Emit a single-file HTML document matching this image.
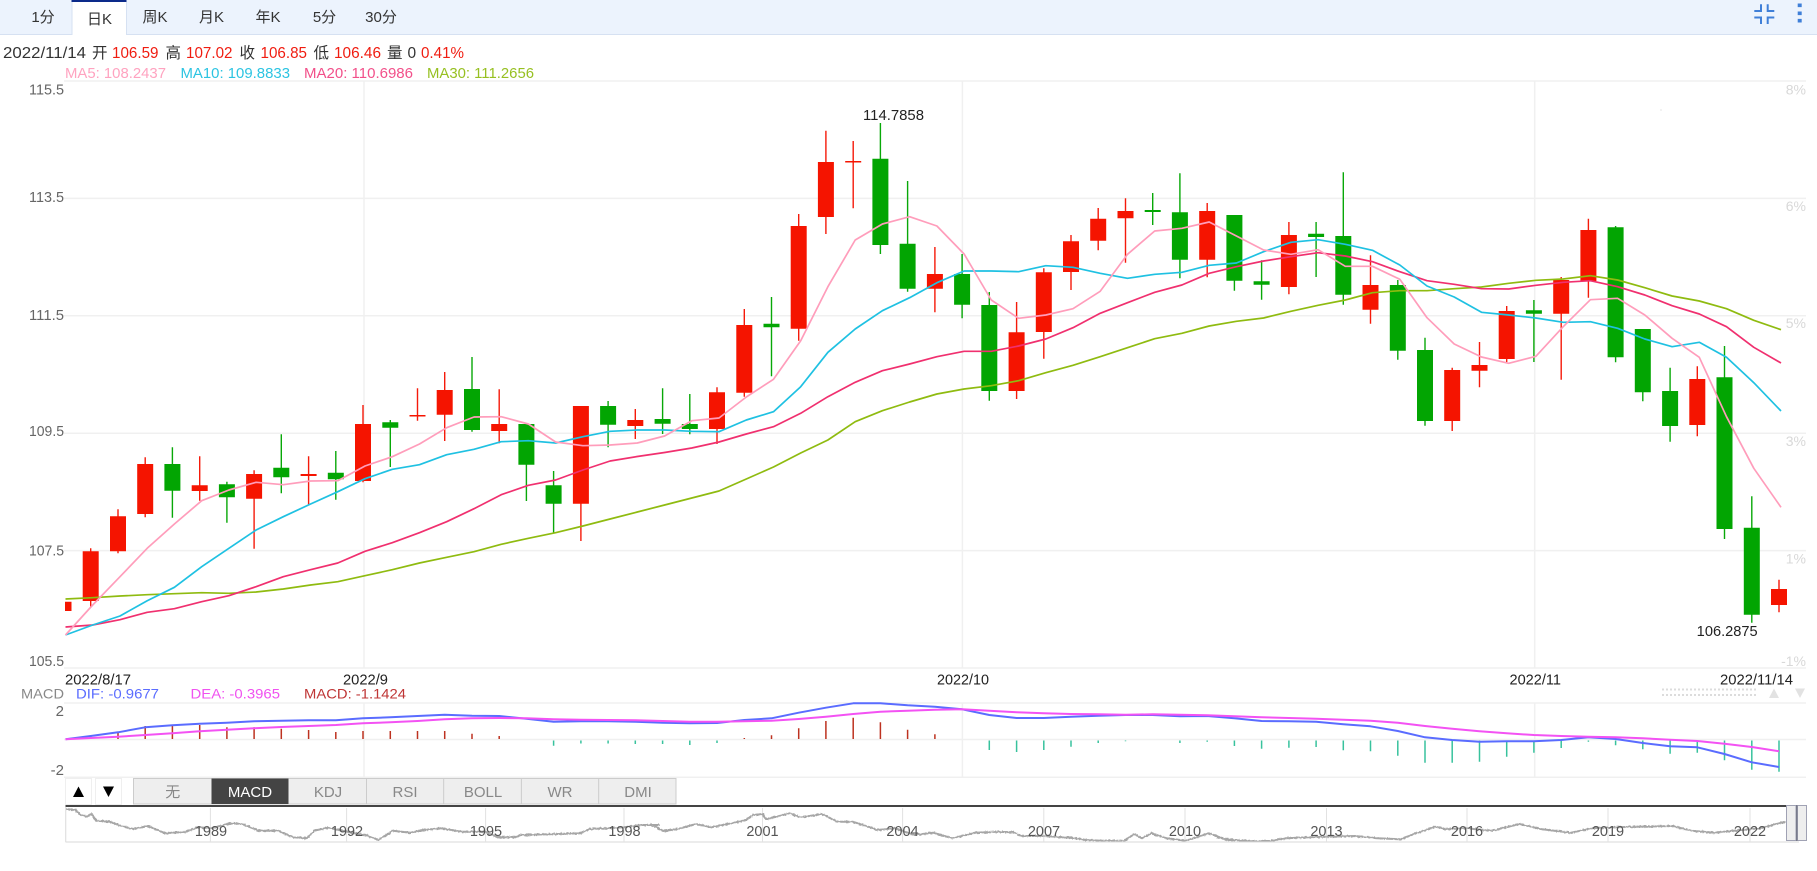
<!DOCTYPE html>
<html lang="zh">
<head>
<meta charset="utf-8">
<title>K</title>
<style>
html,body{margin:0;padding:0;background:#fff;width:1817px;height:871px;overflow:hidden}
svg{display:block}
text{font-family:"Liberation Sans","Noto Sans CJK SC",sans-serif;font-size:14px}
.ax{fill:#666}
.ax text{font-size:15px}
.pc{fill:#d8d8d8;text-anchor:end}
.tab{fill:#333;font-size:15px;text-anchor:middle}
.hd{fill:#333;font-size:15.5px}
.rd{fill:#f01c10;font-size:15.5px}
.ma{font-size:15px}
.bt{fill:#888;font-size:15px;text-anchor:middle}
.yr{fill:#555;font-size:14.5px;text-anchor:middle}
.dt{fill:#222;font-size:14.5px}
</style>
</head>
<body>
<svg width="1817" height="871" viewBox="0 0 1817 871" xmlns="http://www.w3.org/2000/svg">
<defs>
<clipPath id="cp"><rect x="65" y="81" width="1741" height="587"/></clipPath>
<clipPath id="np"><rect x="66" y="807" width="1720" height="34.5"/></clipPath>
<filter id="jit" x="-2%" y="-30%" width="104%" height="160%"><feTurbulence type="fractalNoise" baseFrequency="0.45" numOctaves="2" seed="4"/><feDisplacementMap in="SourceGraphic" scale="2.5" xChannelSelector="R" yChannelSelector="G"/></filter>
</defs>

<!-- top bar -->
<rect x="0" y="0" width="1817" height="34" fill="#ecf3fd"/>
<rect x="0" y="34" width="1817" height="1" fill="#d6e1f2"/>
<rect x="71.5" y="0" width="55" height="35" fill="#fff"/>
<path d="M72 2V35M126.5 2V35" stroke="#d6e1f2" stroke-width="1" fill="none"/>
<rect x="71.5" y="0" width="55" height="2" fill="#0c2a8a"/>
<text class="tab" x="43" y="22">1分</text>
<text class="tab" x="99.5" y="24">日K</text>
<text class="tab" x="155" y="22">周K</text>
<text class="tab" x="211.5" y="22">月K</text>
<text class="tab" x="268" y="22">年K</text>
<text class="tab" x="324.5" y="22">5分</text>
<text class="tab" x="381" y="22">30分</text>
<path d="M1754.3 11H1761V4.3M1767.7 4.3V11H1774.3M1754.3 17.5H1761V24M1774.3 17.5H1767.7V24" stroke="#3f7fd8" stroke-width="2" fill="none"/>
<path d="M1799.7 3.5v3.6M1799.7 11.5v3.6M1799.7 18.9v3.6" stroke="#3f7fd8" stroke-width="4" fill="none"/>

<!-- header info -->
<text class="hd" x="3" y="58" textLength="83" lengthAdjust="spacingAndGlyphs">2022/11/14</text>
<text class="hd" x="92" y="58">开</text>
<text class="rd" x="112" y="58" textLength="46.5" lengthAdjust="spacingAndGlyphs">106.59</text>
<text class="hd" x="165.5" y="58">高</text>
<text class="rd" x="186" y="58" textLength="46.5" lengthAdjust="spacingAndGlyphs">107.02</text>
<text class="hd" x="239.5" y="58">收</text>
<text class="rd" x="260.5" y="58" textLength="46.5" lengthAdjust="spacingAndGlyphs">106.85</text>
<text class="hd" x="313.5" y="58">低</text>
<text class="rd" x="334" y="58" textLength="47" lengthAdjust="spacingAndGlyphs">106.46</text>
<text class="hd" x="387" y="58">量</text>
<text class="hd" x="407.5" y="58">0</text>
<text class="rd" x="421" y="58" textLength="43" lengthAdjust="spacingAndGlyphs">0.41%</text>
<text class="ma" x="65" y="78" fill="#ffa3c0" textLength="101" lengthAdjust="spacingAndGlyphs">MA5: 108.2437</text>
<text class="ma" x="180.5" y="78" fill="#2cc4e2" textLength="109.5" lengthAdjust="spacingAndGlyphs">MA10: 109.8833</text>
<text class="ma" x="304" y="78" fill="#f2508a" textLength="109" lengthAdjust="spacingAndGlyphs">MA20: 110.6986</text>
<text class="ma" x="427" y="78" fill="#97c022" textLength="107" lengthAdjust="spacingAndGlyphs">MA30: 111.2656</text>

<!-- grid -->
<path d="M64 81H1806M64 198.4H1806M64 315.8H1806M64 433.2H1806M64 550.6H1806M64 668H1806" stroke="#f0f0f0" stroke-width="1.5" fill="none"/>
<path d="M364 81V668M962.4 81V668M1534.7 81V668M364 703V777M962.4 703V777M1534.7 703V777" stroke="#f0f0f0" stroke-width="1.5" fill="none"/>
<path d="M64 703H1806M64 739.5H1806M64 777.3H1806" stroke="#f0f0f0" stroke-width="1.5" fill="none"/>

<!-- price axis -->
<g class="ax">
<text x="29" y="94.5" textLength="35" lengthAdjust="spacingAndGlyphs">115.5</text>
<text x="29" y="202" textLength="35" lengthAdjust="spacingAndGlyphs">113.5</text>
<text x="29" y="320" textLength="35" lengthAdjust="spacingAndGlyphs">111.5</text>
<text x="29" y="436" textLength="35" lengthAdjust="spacingAndGlyphs">109.5</text>
<text x="29" y="555.5" textLength="35" lengthAdjust="spacingAndGlyphs">107.5</text>
<text x="29" y="666" textLength="35" lengthAdjust="spacingAndGlyphs">105.5</text>
</g>
<text class="pc" x="1806" y="94.5">8%</text>
<text class="pc" x="1806" y="211">6%</text>
<text class="pc" x="1806" y="328">5%</text>
<text class="pc" x="1806" y="446">3%</text>
<text class="pc" x="1806" y="563.5">1%</text>
<text class="pc" x="1806" y="666">-1%</text>
<path d="M1660 110h2M1662 110h0" stroke="#e6e6e6" stroke-width="1" fill="none"/>

<!-- candles -->
<g clip-path="url(#cp)" fill="none">
<path stroke="#f51a0a" stroke-width="1.4" d="M90.7 548.3V607M118 509.3V553.3M145.2 457.3V517.3M199.7 456.3V500.7M254.1 470.3V548.7M308.6 456.3V505M363 405V482.3M417.5 388.3V420.7M444.7 372V441M499.2 389.3V443.3M580.9 406V541M635.3 409V439M717 387.3V444M744.3 309V396.7M798.7 214V340.7M825.9 130.7V234M853.2 141V208.3M934.9 247V312.3M1016.6 302V399M1043.8 268.3V358.7M1071 235V290M1098.2 208V250.3M1125.5 198.3V262.7M1207.2 203V277.3M1288.9 222V294.3M1370.5 255.3V323.7M1452.2 367.7V431M1479.5 342V387.3M1506.7 306V362M1561.2 277V379.7M1588.4 218.7V297.7M1697.3 366.3V436.3M1779 579.7V612.3"/>
<path stroke="#f51400" stroke-width="16" d="M63.5 601.7V611M90.7 551.3V601M118 516.3V551.3M145.2 464V514M199.7 485.3V491M254.1 474V498.7M308.6 474V476M363 424V481M417.5 415V416.5M444.7 390V414.7M499.2 424V431M580.9 406V503.7M635.3 420V426M717 392.3V429M744.3 325V392.7M798.7 226V328.7M825.9 162V217M853.2 161V162.5M934.9 274V288.7M1016.6 332.3V391M1043.8 272.3V332M1071 241.3V272M1098.2 218.7V240.7M1125.5 211V218.3M1207.2 211V259.7M1288.9 235V287M1370.5 285V309.7M1452.2 370V421M1479.5 365V370.7M1506.7 311V359M1561.2 280V313.7M1588.4 230V281M1697.3 379V425M1779 589V605"/>
<path stroke="#08a808" stroke-width="1.4" d="M172.4 447.3V517.7M226.9 481.7V522.7M281.3 434.3V493.3M335.8 451V499.7M390.3 420V467M472 357V431.7M526.4 424V501M553.6 471V532.7M608.1 401V447.3M662.6 388.3V434M689.8 394V434.3M771.5 297V376.3M880.4 123V254M907.6 181V291.7M962.1 254V318.3M989.3 292V400.7M1152.7 193V225M1179.9 173.3V278.3M1234.4 215V290.7M1261.6 260.3V299.7M1316.1 222V277M1343.3 172.3V304.7M1397.8 280V359.7M1425 337.7V425.7M1533.9 300V362M1615.6 226V362.3M1642.8 329V401.3M1670.1 367.7V441.7M1724.5 346V539M1751.8 496.3V622.7"/>
<path stroke="#02a502" stroke-width="16" d="M172.4 464V490.7M226.9 484.3V497.3M281.3 467.7V477.3M335.8 472.7V479.3M390.3 422.3V427.7M472 389V430M526.4 424V464.7M553.6 485.3V503.7M608.1 406V424.7M662.6 419V423.7M689.8 424V429M771.5 323.7V327.3M880.4 158.7V245M907.6 243.7V288.7M962.1 274V304.7M989.3 305V391M1152.7 210V212M1179.9 212.3V259.7M1234.4 215V280.7M1261.6 281.3V284.7M1316.1 233.7V237M1343.3 236V294.7M1397.8 285V350.7M1425 350V421M1533.9 310.3V313.7M1615.6 227.3V357.3M1642.8 329V392.3M1670.1 391V426M1724.5 377.3V529M1751.8 527.7V614.7"/>
</g>

<!-- moving averages -->
<g transform="translate(2 0)" fill="none" stroke-width="1.7" stroke-linejoin="round">
<polyline stroke="#8fbb10" points="63.5,599 90.7,597.7 118,596 145.2,594.7 172.4,593.7 199.7,592.7 226.9,593.3 254.1,592 281.3,589 308.6,585 335.8,581.7 363,575.7 390.3,569.7 417.5,563 444.7,557.3 472,551.7 499.2,544.3 526.4,538.3 553.6,532.7 580.9,526 608.1,519 635.3,512 662.6,505 689.8,498 717,491 744.3,479 771.5,467 798.7,453 825.9,440 853.2,421.7 880.4,410.7 907.6,402 934.9,394 962.1,389 989.3,385.7 1016.6,380.7 1043.8,372.7 1071,365.3 1098.2,356.7 1125.5,347.7 1152.7,338.7 1179.9,333.3 1207.2,326 1234.4,321.3 1261.6,318 1288.9,311.3 1316.1,305.3 1343.3,300 1370.5,292.7 1397.8,290.7 1425,290.7 1452.2,288.7 1479.5,287 1506.7,283.3 1533.9,280.3 1561.2,279 1588.4,275.7 1615.6,280 1642.8,287.7 1670.1,296 1697.3,301 1724.5,308.7 1751.8,320.3 1779,329.7"/>
<polyline stroke="#f0306f" points="63.5,627 90.7,625 118,619.7 145.2,612.3 172.4,608.7 199.7,601.7 226.9,595.7 254.1,586.7 281.3,576.7 308.6,569.7 335.8,563 363,551.3 390.3,542.7 417.5,532.7 444.7,521.7 472,508.7 499.2,494.7 526.4,485.3 553.6,480 580.9,470 608.1,461 635.3,456.5 662.6,452.5 689.8,448 717,442 744.3,434 771.5,426.7 798.7,413.3 825.9,396.7 853.2,382.3 880.4,370.7 907.6,364 934.9,356.7 962.1,351.3 989.3,351.3 1016.6,346 1043.8,339 1071,327.7 1098.2,313.3 1125.5,302.7 1152.7,292.3 1179.9,285 1207.2,273.3 1234.4,266.7 1261.6,261 1288.9,256.7 1316.1,252.7 1343.3,256 1370.5,261.7 1397.8,271.7 1425,280.7 1452.2,284.3 1479.5,288.7 1506.7,289 1533.9,285.3 1561.2,282.3 1588.4,280.7 1615.6,286.7 1642.8,295 1670.1,305.7 1697.3,314 1724.5,326.7 1751.8,347.3 1779,363"/>
<polyline stroke="#1fc1e2" points="63.5,635 90.7,625 118,616 145.2,600.7 172.4,587.3 199.7,566.7 226.9,548.3 254.1,530 281.3,516.7 308.6,504 335.8,491.7 363,478.7 390.3,469.3 417.5,464.7 444.7,454.7 472,449.3 499.2,441.7 526.4,440.7 553.6,443 580.9,436.7 608.1,431.3 635.3,430 662.6,430 689.8,431.3 717,431.7 744.3,420 771.5,411.7 798.7,386.7 825.9,352.3 853.2,329 880.4,310.7 907.6,297.7 934.9,282.7 962.1,271 989.3,271 1016.6,271.7 1043.8,265.7 1071,267.3 1098.2,273.3 1125.5,278.3 1152.7,274.3 1179.9,272.3 1207.2,265.3 1234.4,263 1261.6,251.7 1288.9,242.3 1316.1,239.7 1343.3,244.3 1370.5,250.3 1397.8,265 1425,286 1452.2,297 1479.5,312.3 1506.7,315 1533.9,318 1561.2,322.3 1588.4,321.7 1615.6,328.3 1642.8,339 1670.1,346.7 1697.3,342.3 1724.5,357.3 1751.8,382.7 1779,411"/>
<polyline stroke="#ff9dbb" points="63.5,635 90.7,605 118,576.7 145.2,548.3 172.4,524 199.7,500.7 226.9,490 254.1,482.3 281.3,484.7 308.6,481 335.8,480.7 363,466 390.3,456.7 417.5,444 444.7,427.7 472,417 499.2,416.7 526.4,424 553.6,442 580.9,445.7 608.1,445 635.3,443 662.6,436 689.8,420.7 717,418 744.3,397 771.5,379.3 798.7,340.7 825.9,286.7 853.2,240 880.4,224 907.6,216.7 934.9,226 962.1,254 989.3,300 1016.6,318.3 1043.8,315 1071,308.7 1098.2,291.3 1125.5,254.3 1152.7,231 1179.9,228.3 1207.2,222 1234.4,236 1261.6,250 1288.9,254.3 1316.1,249.7 1343.3,266.3 1370.5,266.3 1397.8,279.3 1425,317.7 1452.2,344 1479.5,357 1506.7,363.3 1533.9,356.3 1561.2,326.7 1588.4,299.7 1615.6,298.3 1642.8,315 1670.1,338.3 1697.3,357.3 1724.5,416.7 1751.8,468.3 1779,507.3"/>
</g>

<text class="dt" x="863" y="120" textLength="61" lengthAdjust="spacingAndGlyphs">114.7858</text>
<text class="dt" x="1696.7" y="636" textLength="61" lengthAdjust="spacingAndGlyphs">106.2875</text>

<!-- date axis -->
<text class="dt" x="65" y="684.5" textLength="66" lengthAdjust="spacingAndGlyphs">2022/8/17</text>
<text class="dt" x="343" y="684.5" textLength="45" lengthAdjust="spacingAndGlyphs">2022/9</text>
<text class="dt" x="937" y="684.5" textLength="52" lengthAdjust="spacingAndGlyphs">2022/10</text>
<text class="dt" x="1509.5" y="684.5" textLength="51.5" lengthAdjust="spacingAndGlyphs">2022/11</text>
<text class="dt" x="1720" y="684.5" textLength="73" lengthAdjust="spacingAndGlyphs">2022/11/14</text>

<!-- macd legend -->
<text x="21" y="698.5" fill="#888" textLength="43" lengthAdjust="spacingAndGlyphs">MACD</text>
<text x="76" y="698.5" fill="#5b6dff" textLength="83" lengthAdjust="spacingAndGlyphs">DIF: -0.9677</text>
<text x="190.5" y="698.5" fill="#f052f0" textLength="89.5" lengthAdjust="spacingAndGlyphs">DEA: -0.3965</text>
<text x="304" y="698.5" fill="#bf3535" textLength="102" lengthAdjust="spacingAndGlyphs">MACD: -1.1424</text>
<path d="M1662 689.5H1758M1662 695H1758" stroke="#dcdcdc" stroke-width="2" stroke-dasharray="2 2" fill="none"/>
<path d="M1774 688.5l5 9.5h-10zM1800 698l-5-9.5h10z" fill="#e2e2e2"/>
<text class="ax" x="64" y="716" text-anchor="end" style="font-size:15px">2</text>
<text class="ax" x="64" y="775" text-anchor="end" style="font-size:15px">-2</text>

<!-- macd bars -->
<path fill="none" stroke="#bd3220" stroke-width="1.5" d="M90.7 739V736.3M118 739V732M145.2 739V726M172.4 739V725.7M199.7 739V725M226.9 739V727.3M254.1 739V727.3M281.3 739V728.7M308.6 739V730M335.8 739V732M363 739V731M390.3 739V731M417.5 739V731M444.7 739V731M472 739V733.7M499.2 739V736M744.3 739V738M771.5 739V735.3M798.7 739V728.3M825.9 739V721M853.2 739V717.7M880.4 739V722.3M907.6 739V729.7M934.9 739V734.3"/>
<path fill="none" stroke="#38c29d" stroke-width="1.5" d="M553.6 740.5V745.7M580.9 740.5V743.5M608.1 740.5V743.5M635.3 740.5V744M662.6 740.5V744M689.8 740.5V745M717 740.5V743M989.3 740.5V750M1016.6 740.5V752M1043.8 740.5V750M1071 740.5V746.7M1098.2 740.5V743M1125.5 740.5V741.2M1179.9 740.5V743M1207.2 740.5V741.7M1234.4 740.5V746M1261.6 740.5V748.7M1288.9 740.5V747.7M1316.1 740.5V747M1343.3 740.5V750.3M1370.5 740.5V751.3M1397.8 740.5V755.7M1425 740.5V762.7M1452.2 740.5V762.7M1479.5 740.5V761.7M1506.7 740.5V756.7M1533.9 740.5V752.7M1561.2 740.5V748M1588.4 740.5V741.7M1615.6 740.5V745.3M1642.8 740.5V749.3M1670.1 740.5V753.7M1697.3 740.5V752.7M1724.5 740.5V760.3M1751.8 740.5V769.7M1779 740.5V771.7"/>
<!-- macd lines -->
<polyline fill="none" stroke="#5a6cff" stroke-width="2" stroke-linejoin="round" points="65.5,739.3 90.7,736 118,732.3 145.2,727.3 172.4,725.3 199.7,723.7 226.9,722.7 254.1,721.3 281.3,720.7 308.6,720.3 335.8,720.3 363,718.3 390.3,717.3 417.5,716 444.7,714.7 472,715.7 499.2,716 526.4,718.7 553.6,721.7 580.9,721.3 608.1,721.3 635.3,721.7 662.6,722.7 689.8,723.3 717,723 744.3,720 771.5,718.3 798.7,712.7 825.9,707.7 853.2,703.3 880.4,703.3 907.6,705.3 934.9,706.7 962.1,709.3 989.3,715 1016.6,718 1043.8,718 1071,716.7 1098.2,715.7 1125.5,715 1152.7,715 1179.9,716.3 1207.2,716 1234.4,718.3 1261.6,721 1288.9,721.3 1316.1,721.7 1343.3,724.3 1370.5,726.3 1397.8,731 1425,737.3 1452.2,740 1479.5,741.7 1506.7,741.3 1533.9,741.3 1561.2,740 1588.4,737.3 1615.6,739 1642.8,743 1670.1,746.3 1697.3,747.3 1724.5,754 1751.8,762.3 1779,767"/>
<polyline fill="none" stroke="#f352f3" stroke-width="2" stroke-linejoin="round" points="65.5,739.3 90.7,738 118,736.7 145.2,735 172.4,733.3 199.7,731.3 226.9,729.7 254.1,728.3 281.3,727 308.6,726 335.8,725 363,723.3 390.3,722.3 417.5,721 444.7,719.3 472,718.3 499.2,718 526.4,718.3 553.6,719.3 580.9,719.7 608.1,720 635.3,720.3 662.6,721 689.8,721.7 717,721.7 744.3,721.3 771.5,720.7 798.7,719 825.9,716.7 853.2,714 880.4,711.7 907.6,710.7 934.9,709.7 962.1,709.3 989.3,710.7 1016.6,712.3 1043.8,713.3 1071,714 1098.2,714.3 1125.5,714.7 1152.7,714.3 1179.9,714.7 1207.2,715.3 1234.4,716.3 1261.6,717.3 1288.9,718 1316.1,718.7 1343.3,719.7 1370.5,720.7 1397.8,722.7 1425,726 1452.2,728.7 1479.5,731.3 1506.7,733.3 1533.9,735 1561.2,736 1588.4,736.7 1615.6,737.3 1642.8,738.3 1670.1,739.7 1697.3,741 1724.5,743.7 1751.8,747 1779,751.3"/>

<!-- indicator buttons -->
<rect x="65.5" y="778.5" width="26" height="26" fill="#fff" stroke="#efefef"/>
<rect x="95.5" y="778.5" width="26" height="26" fill="#fff" stroke="#efefef"/>
<path d="M78.5 786.5l5.5 10.5h-11zM108.5 797l-5.5-10.5h11z" fill="#000"/>
<rect x="133.5" y="778.5" width="542.5" height="25.5" fill="#eee" stroke="#ccc"/>
<rect x="211.5" y="778.5" width="77" height="25.5" fill="#444"/>
<path d="M366.5 779V804M443.7 779V804M521.4 779V804M598.7 779V804" stroke="#ccc" stroke-width="1" fill="none"/>
<text class="bt" x="172.8" y="797">无</text>
<text x="250" y="797" fill="#fff" style="font-size:15px" text-anchor="middle">MACD</text>
<text class="bt" x="328" y="797">KDJ</text>
<text class="bt" x="405" y="797">RSI</text>
<text class="bt" x="483" y="797">BOLL</text>
<text class="bt" x="560" y="797">WR</text>
<text class="bt" x="638" y="797">DMI</text>

<!-- navigator -->
<rect x="65.5" y="805" width="1721" height="2" fill="#444"/>
<path d="M65.7 807V842M65.5 842H1799" stroke="#e0e0e0" stroke-width="1.2" fill="none"/>
<path d="M210.4 808V842M346.6 808V842M485.6 808V842M624 808V842M762.5 808V842M902.6 808V842M1043.8 808V842M1185 808V842M1326.5 808V842M1467 808V842M1608 808V842M1750 808V842" stroke="#e2e2e2" stroke-width="1" fill="none"/>
<g clip-path="url(#np)" fill="none" stroke="#a6a6a6" stroke-width="2" stroke-linejoin="round">
<g filter="url(#jit)">
<polyline points="66,809 75.3,810 81,815 86.8,816.7 91.4,814 96.4,820.7 109.8,821.7 121.2,826 132.7,829 148,826 165.2,833.3 186.3,831.7 197.8,827.3 211.2,828.3 230.3,823.3 241.8,824 259,830.7 278.1,830.7 293.4,837.3 306.8,838.3 314.5,830.7 327.9,827.7 350.9,832.7 366.2,835 378.4,840 393,830.7 410.2,832.7 423.6,830 440.8,828.3 461.9,831.7 484.8,831.7 498.2,837.3 515.4,837.3 521.2,835 557.5,834 580.5,833.3 590,829 607.2,828.3 624.1,827.3 641.7,825 660,825 "/>
<polyline points="650,824 663.4,831 676.8,829.3 695.9,824 711.2,827.3 734.2,822.7 745.7,820 753.3,815 762.5,814 766.2,819.3 789.7,813.3 801.2,817.3 822.2,814 837.5,821.7 852.8,821.7 877.7,830 895.0,828.3 914.1,835 933.2,832.7 952.3,838.3 975.3,832.7 994.4,831.7 1013.6,832.3 1021.2,836 1044.2,836 1071,837.7 1086.3,840 1101.6,840.7 1124.6,840.7 1134.1,834 1141.8,838.3 1151.4,833.3 1166.7,838.3 1185.8,840.7 1208.8,833.3 1227.9,840 1247,840.7"/>
<polyline points="1217,837.3 1228.5,839.3 1245.7,841.3 1268.7,841.3 1285.9,838.3 1308.8,837.3 1326.1,836.7 1354.8,836 1377.7,838.3 1400.7,839.3 1416,833.3 1435.1,826.7 1446.6,829.3 1465.8,828.3 1492.5,830.7 1519.3,824 1542.2,829.3 1571,832.7 1592,828.3 1615,827.3 1672.4,826 1691.5,830.7 1714.4,832.7 1733.6,830.7 1760.4,828.3 1785.2,821.7"/>
</g>
</g>
<text class="yr" x="211" y="836">1989</text>
<text class="yr" x="347" y="836">1992</text>
<text class="yr" x="486" y="836">1995</text>
<text class="yr" x="624.5" y="836">1998</text>
<text class="yr" x="762.5" y="836">2001</text>
<text class="yr" x="902.5" y="836">2004</text>
<text class="yr" x="1044" y="836">2007</text>
<text class="yr" x="1185" y="836">2010</text>
<text class="yr" x="1326.5" y="836">2013</text>
<text class="yr" x="1467" y="836">2016</text>
<text class="yr" x="1608" y="836">2019</text>
<text class="yr" x="1750" y="836">2022</text>
<rect x="1786.5" y="805.5" width="9.5" height="35" fill="#eee" stroke="#a0a2b4" stroke-width="1"/>
<rect x="1797.5" y="805.5" width="9" height="35" fill="#eee" stroke="#a0a2b4" stroke-width="1"/>
<rect x="1796" y="805" width="1.5" height="36" fill="#777a8a"/>
</svg>
</body>
</html>
